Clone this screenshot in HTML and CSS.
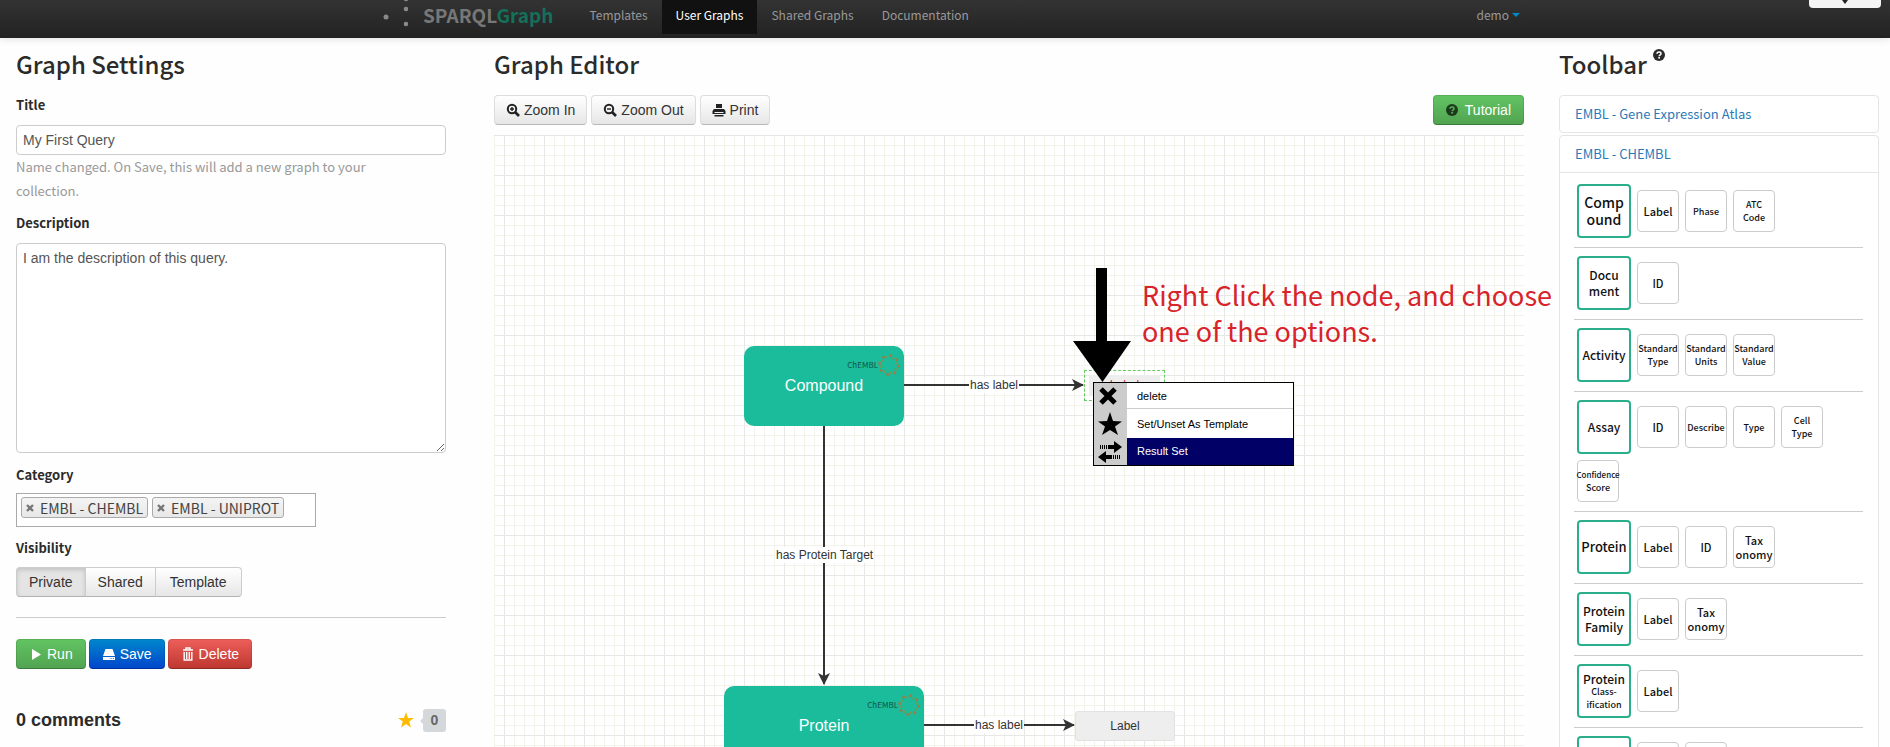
FILE: index.html
```html
<!DOCTYPE html>
<html lang="en">
<head>
<meta charset="utf-8">
<title>SPARQLGraph - Graph Editor</title>
<link rel="stylesheet" href="styles.css">
</head>
<body>
<svg class="defs" width="0" height="0" aria-hidden="true">
  <defs>
    <g id="ring" fill="none" stroke-width="2.500">
      <circle cx="11" cy="11" r="9.500" stroke="#a07a45" stroke-dasharray="2.500 5"/>
      <circle cx="11" cy="11" r="8" stroke="#6f9a55" stroke-dasharray="2 4.300" stroke-dashoffset="3"/>
    </g>
    <g id="help">
      <circle cx="6" cy="6" r="6" fill="currentColor"/>
      <path d="M4 4.8C4 3.6 4.8 3 6 3s2 .7 2 1.700C8 5.900 6.200 5.700 6.200 7.200" fill="none" stroke="var(--mark)" stroke-width="1.500"/>
      <rect x="5.300" y="8" width="1.700" height="1.600" fill="var(--mark)"/>
    </g>
    <marker id="tip" viewBox="0 0 12 12" refX="11" refY="6" markerWidth="12" markerHeight="12" markerUnits="userSpaceOnUse" orient="auto">
      <path d="M0 0L12 6L0 12L3 6Z" fill="#333"/>
    </marker>
  </defs>
</svg>

<header class="navbar">
  <div class="navbar-inner">
    <a class="brand" href="#">
      <svg width="26" height="30" viewBox="0 0 26 30" aria-hidden="true"><g fill="#8a8a8a"><circle cx="4" cy="17" r="2.500"/><circle cx="24" cy="9" r="2.300"/><circle cx="24" cy="24" r="2.300"/><circle cx="24" cy="-1" r="2.200"/></g></svg>
      <span>SPARQL<em>Graph</em></span>
    </a>
    <nav class="menu">
      <a href="#">Templates</a>
      <a href="#" class="active">User Graphs</a>
      <a href="#">Shared Graphs</a>
      <a href="#">Documentation</a>
    </nav>
    <a class="user" href="#">demo<i class="caret"></i></a>
  </div>
  <button class="pull-tab" aria-label="Show panel"></button>
</header>

<main class="layout">
  <section class="settings">
    <h2>Graph Settings</h2>
    <label class="field-label" for="title">Title</label>
    <input id="title" class="control" type="text" value="My First Query">
    <p class="help">Name changed. On Save, this will add a new graph to your collection.</p>
    <label class="field-label" for="description">Description</label>
    <textarea id="description" class="control area">I am the description of this query.</textarea>
    <span class="field-label">Category</span>
    <div class="chips">
      <span class="chip"><button aria-label="Remove EMBL - CHEMBL"><svg width="8" height="8" viewBox="0 0 8 8"><path d="M1 1L7 7M7 1L1 7" stroke="#777" stroke-width="2.400"/></svg></button>EMBL - CHEMBL</span>
      <span class="chip"><button aria-label="Remove EMBL - UNIPROT"><svg width="8" height="8" viewBox="0 0 8 8"><path d="M1 1L7 7M7 1L1 7" stroke="#777" stroke-width="2.400"/></svg></button>EMBL - UNIPROT</span>
    </div>
    <span class="field-label">Visibility</span>
    <div class="group">
      <button class="btn pressed">Private</button><button class="btn">Shared</button><button class="btn">Template</button>
    </div>
    <hr class="rule">
    <div class="actions">
      <button class="btn solid green"><svg width="14" height="14" viewBox="0 0 14 14"><path d="M3 2L12 7.500L3 13Z" fill="#fff"/></svg>Run</button>
      <button class="btn solid blue"><svg width="14" height="14" viewBox="0 0 14 14"><path d="M3.500 2H10.500L13 9H1ZM1 10H13V13H1Z" fill="#fff"/><path d="M8.500 11.500h1M10.800 11.500h1" stroke="#0a5fd0"/></svg>Save</button>
      <button class="btn solid red"><svg width="14" height="14" viewBox="0 0 14 14"><path d="M5 2.500V1H9V2.500M2 3H12M3.200 5V13H10.800V5M5.700 5V12M8.300 5V12" fill="none" stroke="#fff" stroke-width="1.400"/></svg>Delete</button>
    </div>
    <div class="comments">
      <h3>0 comments</h3>
      <svg width="16" height="16" viewBox="0 0 16 16" aria-label="Favourite"><path d="M8 0L10 6H16L11.200 9.600L13 15.500L8 12L3 15.500L4.800 9.600L0 6H6Z" fill="#fb0"/></svg>
      <span class="count">0</span>
    </div>
  </section>

  <section class="editor">
    <h2>Graph Editor</h2>
    <div class="tools">
      <button class="btn"><svg width="14" height="14" viewBox="0 0 14 14"><circle cx="6" cy="6" r="4.200" fill="none" stroke="#222" stroke-width="2"/><path d="M9 9L13 13" stroke="#222" stroke-width="2.600"/><path d="M4 6H8M6 4V8" stroke="#222" stroke-width="1.400"/></svg>Zoom In</button>
      <button class="btn"><svg width="14" height="14" viewBox="0 0 14 14"><circle cx="6" cy="6" r="4.200" fill="none" stroke="#222" stroke-width="2"/><path d="M9 9L13 13" stroke="#222" stroke-width="2.600"/><path d="M4 6H8" stroke="#222" stroke-width="1.400"/></svg>Zoom Out</button>
      <button class="btn"><svg width="14" height="14" viewBox="0 0 14 14"><path d="M4 1H10V5H4ZM2 6H12L13.500 8V11H.5V8ZM2.500 12H11.500V13.500H2.500Z" fill="#222"/><path d="M2.500 9.500H11.500" stroke="#eee" stroke-width="1"/></svg>Print</button>
      <button class="btn solid green tutorial"><svg width="12" height="12" viewBox="0 0 12 12"><use href="#help"/></svg>Tutorial</button>
    </div>
    <div class="canvas">
      <svg class="edges" width="1030" height="600" aria-hidden="true">
        <g stroke="#333" stroke-width="2" fill="none">
          <path d="M410 250H589" marker-end="url(#tip)"/>
          <path d="M330 290V549" marker-end="url(#tip)"/>
          <path d="M430 590H580" marker-end="url(#tip)"/>
        </g>
      </svg>
      <span class="edge-label e1">has label</span>
      <span class="edge-label e2">has Protein Target</span>
      <span class="edge-label e3">has label</span>
      <div class="node compound"><span class="logo">ChEMBL<svg width="22" height="22"><use href="#ring"/></svg></span>Compound</div>
      <div class="node protein"><span class="logo">ChEMBL<svg width="22" height="22"><use href="#ring"/></svg></span>Protein</div>
      <div class="leaf selected"><span>Label</span></div>
      <div class="leaf plain">Label</div>
      <svg class="pointer" width="58" height="114" viewBox="0 0 58 114" aria-hidden="true"><path d="M23 0H34V73H58L29.500 114L0 73H23Z"/></svg>
      <p class="note">Right Click the node, and choose<br>one of the options.</p>
      <div class="context" role="menu">
        <button role="menuitem"><span class="ico"><svg width="20" height="20" viewBox="0 0 20 20"><path d="M3 3L17 17M17 3L3 17" stroke="#000" stroke-width="5"/></svg></span><span class="txt">delete</span></button>
        <button role="menuitem"><span class="ico"><svg width="24" height="24" viewBox="0 0 24 24"><path d="M12 0L15 9L24 9.500L17 14.500L20 23L12 18L4 23L7 14.500L0 9.500L9 9Z"/></svg></span><span class="txt">Set/Unset As Template</span></button>
        <button role="menuitem" class="current"><span class="ico"><svg width="24" height="22" viewBox="0 0 24 22"><path d="M10 4H16V0L24 6L16 12V8H10ZM14 14H8V10L0 16L8 22V18H14Z"/><path d="M2.500 4V8M4.500 4V8M6.500 4V8M8.500 4V8M15.500 14V18M17.500 14V18M19.500 14V18M21.500 14V18" stroke="#000"/></svg></span><span class="txt">Result Set</span></button>
      </div>
    </div>
  </section>

  <section class="toolbar">
    <h2>Toolbar<svg class="help-icon" width="12" height="12" viewBox="0 0 12 12"><use href="#help"/></svg></h2>
    <div class="panel"><a class="panel-head" href="#">EMBL - Gene Expression Atlas</a></div>
    <div class="panel open">
      <a class="panel-head" href="#">EMBL - CHEMBL</a>
      <div class="panel-body">
        <div class="tiles"><button class="tile main big">Comp<br>ound</button><button class="tile">Label</button><button class="tile small">Phase</button><button class="tile small">ATC<br>Code</button></div>
        <div class="tiles"><button class="tile main">Docu<br>ment</button><button class="tile">ID</button></div>
        <div class="tiles"><button class="tile main">Activity</button><button class="tile small">Standard<br>Type</button><button class="tile small">Standard<br>Units</button><button class="tile small">Standard<br>Value</button></div>
        <div class="tiles"><button class="tile main">Assay</button><button class="tile">ID</button><button class="tile small">Describe</button><button class="tile small">Type</button><button class="tile small">Cell<br>Type</button><button class="tile small"><small>Confidence</small>Score</button></div>
        <div class="tiles"><button class="tile main wide">Protein</button><button class="tile">Label</button><button class="tile">ID</button><button class="tile">Tax<br>onomy</button></div>
        <div class="tiles"><button class="tile main">Protein<br>Family</button><button class="tile">Label</button><button class="tile">Tax<br>onomy</button></div>
        <div class="tiles"><button class="tile main tight">Protein<small>Class-<br>ification</small></button><button class="tile">Label</button></div>
        <div class="tiles"><button class="tile main"></button><button class="tile"></button><button class="tile"></button></div>
      </div>
    </div>
  </section>
</main>
</body>
</html>
```
FILE: styles.css
```css
* { box-sizing: border-box; }

:root {
  --sans: "Noto Sans CJK SC", "Open Sans", sans-serif;
  --ui: "Liberation Sans", Arial, sans-serif;
  --teal: #1abc9c;
  --mark: #fff;
}

body {
  margin: 0;
  height: 100vh;
  display: flex;
  flex-direction: column;
  overflow: hidden;
  background: #fefefe;
  color: #2b2b2b;
  font: 14px/24px var(--sans);
}

button { font: inherit; color: inherit; margin: 0; cursor: pointer; }
.defs { position: absolute; }

.navbar {
  position: relative;
  flex: none;
  height: 38px;
  background: linear-gradient(#333, #222);
  box-shadow: 0 1px 8px rgba(0, 0, 0, .12);
}
.navbar-inner {
  display: flex;
  align-items: flex-start;
  width: 1150px;
  max-width: 100%;
  margin: 0 auto;
  padding-left: 12px;
  font-size: 12px;
  line-height: 30px;
}
.navbar a { color: #999; text-decoration: none; }
.navbar .brand {
  display: flex;
  gap: 15px;
  margin-right: 22px;
  color: #777;
  font-size: 19px;
  font-weight: 700;
}
.brand em { font-style: normal; color: #14705a; }
.menu { display: flex; }
.menu a { padding: 0 14px 4px; }
.navbar .menu .active { background: #111; color: #fff; }
.user { margin-left: auto; display: flex; align-items: center; gap: 3px; }
.caret { border: 4px solid transparent; border-top-color: #08c; border-bottom: 0; }
.pull-tab {
  position: absolute;
  top: 0;
  right: 9px;
  width: 72px;
  height: 8px;
  padding: 0;
  border: 0;
  border-radius: 0 0 4px 4px;
  background: #f4f4f4;
}
.pull-tab::after {
  content: "";
  display: block;
  width: 0;
  margin: -4px auto 4px;
  border: 6px solid transparent;
  border-top: 8px solid #222;
  border-bottom: 0;
}

.layout {
  flex: 1;
  min-height: 0;
  display: grid;
  grid-template-columns: 443fr 1030fr 320fr;
  column-gap: 35px;
  padding: 9px 11px 0 16px;
  overflow: hidden;
}
.layout > section { min-width: 0; min-height: 0; display: flex; flex-direction: column; }
h2 { flex: none; margin: 0 0 14px; font-size: 24px; line-height: 34px; font-weight: 500; }

.settings { padding-right: 13px; }
.field-label { flex: none; font-size: 13px; font-weight: 700; line-height: 20px; }
.control {
  flex: none;
  width: 100%;
  height: 30px;
  margin: 10px 0 0;
  padding: 4px 6px;
  border: 1px solid #ccc;
  border-radius: 4px;
  background: #fff;
  color: #555;
  font: 14px/20px var(--ui);
}
.area { height: 210px; margin-bottom: 12px; }
.help { margin: 0 0 10px; padding-right: 40px; color: #999; font-size: 13px; line-height: 24px; }
.chips {
  flex: none;
  display: flex;
  align-items: flex-start;
  gap: 4px;
  width: 300px;
  height: 34px;
  margin: 8px 0 11px;
  padding: 3px 4px;
  border: 1px solid #aaa;
  background: #fff;
}
.chip {
  display: flex;
  align-items: center;
  height: 21px;
  padding: 0 4px;
  border: 1px solid #aaa;
  border-radius: 3px;
  background: linear-gradient(#f4f4f4, #e8e8e8);
  color: #444;
  white-space: nowrap;
}
.chip button { display: flex; padding: 0; margin-right: 6px; border: 0; background: none; }

.btn {
  display: inline-flex;
  align-items: center;
  gap: 4px;
  height: 30px;
  padding: 0 12px;
  border: 1px solid #ccc;
  border-bottom-color: #b3b3b3;
  border-radius: 4px;
  background: linear-gradient(#fff, #e6e6e6);
  color: #333;
  font: 14px/20px var(--ui);
}
.tools .btn { padding: 0 11px; border-color: #ddd #ddd #b8b8b8; }
.group { display: flex; margin-top: 9px; }
.group .btn { border-radius: 0; margin-left: -1px; }
.group .btn:first-child { border-radius: 4px 0 0 4px; margin-left: 0; }
.group .btn:last-child { border-radius: 0 4px 4px 0; padding: 0 14px; }
.btn.pressed { background: #e4e4e4; box-shadow: inset 0 2px 4px rgba(0, 0, 0, .15); }
.rule { width: 100%; margin: 20px 0 21px; border: 0; border-top: 1px solid #ccc; }
.actions { display: flex; gap: 3px; }
.btn.solid { color: #fff; border-color: rgba(0, 0, 0, .1) rgba(0, 0, 0, .1) rgba(0, 0, 0, .25); }
.green { background: linear-gradient(#62c462, #51a351) border-box; }
.blue { background: linear-gradient(#08c, #04c) border-box; }
.red { background: linear-gradient(#ee5f5b, #bd362f) border-box; }

.comments { display: flex; align-items: center; margin-top: 36px; font-family: var(--ui); }
h3 { margin: 0 auto 0 0; font-size: 18px; line-height: 30px; }
.count {
  position: relative;
  width: 23px;
  margin-left: 9px;
  border-radius: 3px;
  background: #d5d8db;
  color: #666;
  font-size: 14px;
  font-weight: 700;
  line-height: 23px;
  text-align: center;
}
.count::before {
  content: "";
  position: absolute;
  left: -3px;
  top: 8px;
  border: 4px solid transparent;
  border-right: 4px solid #d5d8db;
  border-left: 0;
}

.tools { flex: none; display: flex; gap: 4px; margin-bottom: 10px; }
.tools .tutorial { margin-left: auto; padding: 0 12px; gap: 7px; --mark: #57b357; }
.tutorial svg { color: #1c3a1c; }

.canvas {
  position: relative;
  flex: 1;
  min-height: 0;
  border-top: 1px solid #e6e6e6;
  background:
    linear-gradient(90deg, #e6e8e6 1px, transparent 1px) 10px 0 / 40px 40px,
    linear-gradient(#e6e8e6 1px, transparent 1px) 0 -1px / 40px 40px,
    linear-gradient(90deg, #f3f3ec 1px, transparent 1px) 0 0 / 10px 10px,
    linear-gradient(#f3f3ec 1px, transparent 1px) 0 -1px / 10px 10px,
    #fff;
}
.edges { position: absolute; left: 0; top: -1px; }
.edge-label {
  position: absolute;
  padding: 0 1px;
  background: #fff;
  color: #333;
  font: 12px/16px var(--ui);
  white-space: nowrap;
}
.e1 { left: 475px; top: 241px; }
.e2 { left: 281px; top: 411px; }
.e3 { left: 480px; top: 581px; }
.node {
  position: absolute;
  height: 80px;
  border-radius: 10px;
  background: var(--teal);
  color: #fff;
  font: 16px/80px var(--ui);
  text-align: center;
}
.compound { left: 250px; top: 210px; width: 160px; }
.protein { left: 230px; top: 550px; width: 200px; }
.logo {
  position: absolute;
  top: 8px;
  right: 4px;
  display: flex;
  align-items: center;
  color: #0d5547;
  font: 8px/22px var(--sans);
}
.leaf { position: absolute; text-align: center; font: 12px/30px var(--ui); color: #333; }
.selected {
  left: 590px;
  top: 234px;
  width: 81px;
  height: 31px;
  padding: 4px;
  border: 1px dashed #6c6;
}
.selected span { display: block; background: #eee; color: #c33; line-height: 21px; }
.plain {
  left: 581px;
  top: 575px;
  width: 100px;
  height: 30px;
  border: 1px solid #e2e2e2;
  border-radius: 3px;
  background: #eee;
  line-height: 28px;
}
.pointer { position: absolute; left: 579px; top: 132px; z-index: 1; }
.note {
  position: absolute;
  left: 648px;
  top: 141px;
  margin: 0;
  color: #d8232a;
  font-size: 27px;
  line-height: 36px;
  white-space: nowrap;
}
.context {
  position: absolute;
  left: 599px;
  top: 246px;
  display: grid;
  grid-template-rows: 26px 29px 27px;
  width: 201px;
  border: 1px solid #000;
  background: #fff;
}
.context button { display: flex; padding: 0; border: 0; background: none; text-align: left; font: 11px/27px var(--ui); color: #000; }
.ico { display: flex; align-items: center; width: 33px; height: 100%; padding-left: 4px; background: #ccc; }
.txt { flex: 1; height: 100%; padding-left: 10px; border-bottom: 1px solid #ccc; }
.context button:nth-child(2) .txt { border: 0; line-height: 31px; }
.context .current .txt { background: #006; color: #fff; border: 0; }

.toolbar h2 { display: flex; }
.help-icon { margin: 2px 0 0 6px; }
.panel { flex: none; margin-bottom: 2px; border: 1px solid #e5e5e5; border-radius: 4px; background: #fff; }
.panel-head { display: block; padding: 6px 15px; color: #2a7ab8; font-size: 13px; line-height: 24px; text-decoration: none; }
.panel-body { padding: 11px 15px 11px 14px; border-top: 1px solid #e5e5e5; }
.tiles {
  display: flex;
  flex-wrap: wrap;
  align-items: center;
  gap: 6px;
  padding: 0 3px 9px;
  margin-bottom: 8px;
  border-bottom: 1px solid #ccc;
}
.tile {
  width: 42px;
  height: 42px;
  padding: 0;
  border: 1px solid #ccc;
  border-radius: 4px;
  background: #fff;
  color: #111;
  font: 500 11px/14px var(--sans);
  display: flex;
  flex-direction: column;
  align-items: center;
  justify-content: center;
  white-space: nowrap;
}
.tile.small { font-size: 9px; line-height: 13px; }
.tile small { font-size: 8px; line-height: 13px; }
.tile.main { width: 54px; height: 54px; border: 2px solid #2bae8c; font-size: 12px; line-height: 16px; }
.tile.main.big { font-size: 14px; line-height: 17px; }
.tile.main.wide { font-size: 13px; }
.tile.main small { font-size: 9px; }
.tile.tight { line-height: 13px; }
```
